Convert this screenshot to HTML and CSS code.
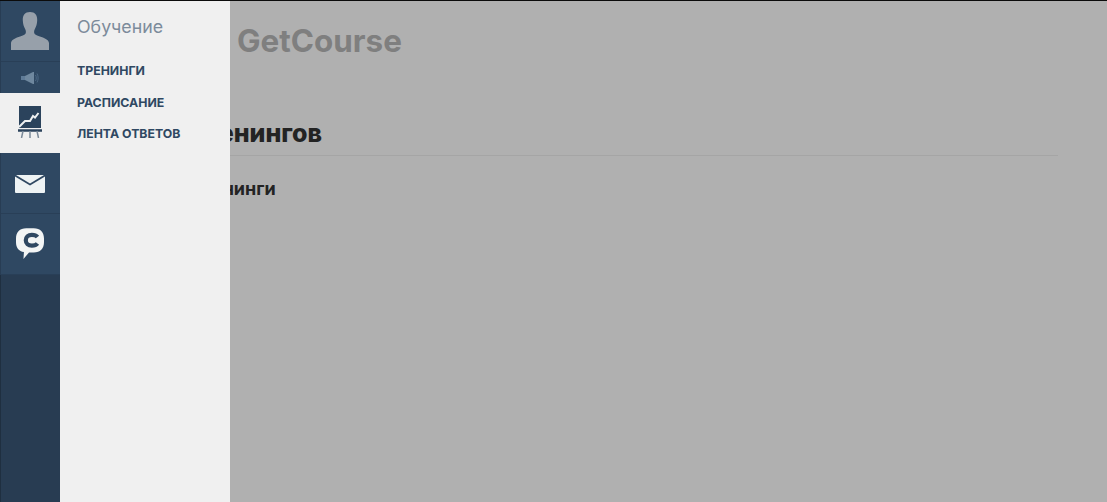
FILE: index.html
```html
<!DOCTYPE html>
<html lang="ru">
<head>
<meta charset="utf-8">
<title>GetCourse</title>
<link rel="stylesheet" href="styles.css">
</head>
<body>
<div class="app">
  <nav class="rail">
    <a class="rail-item rail-avatar">
      <svg width="40" height="40" viewBox="0 0 40 40"><path fill="#97a0aa" d="M20 1c-5 0-7.500 3.300-7.200 8.500.2 3.500 1 6 2.300 8.500.8 1.300 1 3 .6 4.300-.5 1.500-2.600 2.200-5.600 3.300C6 27 1.500 28.500 1 32v7h38v-7c-.5-3.500-5-5-9.100-6.400-3-1.100-5.100-1.800-5.600-3.300-.4-1.300-.2-3 .6-4.300 1.300-2.500 2.100-5 2.300-8.500C27.500 4.300 25 1 20 1z"/></svg>
    </a>
    <a class="rail-item rail-sound">
      <svg width="20" height="14" viewBox="0 0 20 14"><path fill="#5f7b97" d="M1 5h4v4H1z"/><path fill="#6f889f" d="M5 5l8-4h1v12h-1L5 9z"/><path fill="none" stroke="#4d6985" stroke-width="1" d="M15.500 4c1 2 1 4 0 6M17 2.500c1.500 3 1.500 6 0 9"/></svg>
    </a>
    <a class="rail-item rail-active">
      <svg width="24" height="32" viewBox="0 0 24 32"><rect x="1" y="0" width="22" height="22" fill="#2b435c"/><path fill="none" stroke="#eef1f2" stroke-width="2" d="M1 21l6-6h5l3-5 2 1.500L20.500 7"/><path stroke="#2b435c" stroke-width="2.500" d="M0 24.500h24"/><path stroke="#7b8a99" stroke-width="1.500" d="M5 25l-1.500 7M12 25v7M19 25l1.500 7"/></svg>
    </a>
    <a class="rail-item rail-mail">
      <svg width="30" height="18" viewBox="0 0 30 18"><path fill="#eef3f4" d="M1 0h28L15 8.500z"/><path fill="#eef3f4" d="M0 1.500V17a1 1 0 0 0 1 1h28a1 1 0 0 0 1-1V1.500L15 10.500z"/></svg>
    </a>
    <a class="rail-item">
      <svg width="28" height="32" viewBox="0 0 30 34"><path fill="#f3f5f5" d="M11 0h8c7 0 11 4 11 11v4c0 7-4 11-11 11h-5l-6 7 .5-7.300C3 24.500 0 21 0 15v-4C0 4 4 0 11 0z"/><path fill="none" stroke="#2f4862" stroke-width="4.500" d="M23 9.500c-1-1.300-3.300-2.300-6-2.300-4 0-6.500 2.300-6.500 5.800s2.500 5.800 6.500 5.800c2.700 0 5-1 6-2.300"/></svg>
    </a>
  </nav>
  <aside class="panel">
    <h2 class="panel-title">Обучение</h2>
    <ul class="panel-menu">
      <li><a>Тренинги</a></li>
      <li><a>Расписание</a></li>
      <li><a>Лента ответов</a></li>
    </ul>
  </aside>
  <main class="main">
    <div class="brand">GetCourse</div>
    <h1 class="page-title">Каталог тренингов</h1>
    <h3 class="section-title">Мои тренинги</h3>
  </main>
</div>
</body>
</html>
```
FILE: styles.css
```css
* { box-sizing: border-box; }
html, body { margin: 0; height: 100%; overflow: hidden; }
body { background: #b0b0b0; font-family: Inter, "Liberation Sans", sans-serif; }
.app { position: relative; display: flex; height: 502px; border-top: 1px solid #0b0b0b; }
.rail { flex: 0 0 60px; display: flex; flex-direction: column; background: #283c52; box-shadow: inset 1px 0 0 #1f2f40; height: 501px; }
.rail-item { height: 61px; display: flex; align-items: center; justify-content: center; padding-right: 2px; background: #2f4862; border-bottom: 1px solid #293f57; border-left: 1px solid #283d54; }
.rail-sound { height: 31px; border-bottom: 0; }
.rail-active { height: 60px; padding: 0 0 2px; background: #f0f0f0; border: 0; }
.rail-mail { padding-top: 2px; }
.panel { flex: 0 0 170px; background: #f0f0f0; padding: 15px 17px 0; position: relative; z-index: 1; }
.panel-title { margin: 0 0 25px; font-size: 17.8px; line-height: 22px; font-weight: 400; color: #7c8b9b; }
.panel-menu { margin: 0; padding: 0; list-style: none; display: flex; flex-direction: column; gap: 15px; }
.panel-menu li:first-child { margin-bottom: 1px; }
.panel-menu a { display: block; font-size: 12.3px; line-height: 16px; font-weight: 700; text-transform: uppercase; color: #2f4862; }
.main { flex: 1; min-width: 0; margin-left: -149px; margin-right: 49px; padding: 23px 0 0 0; }
.brand { margin-left: 156px; font-size: 31.4px; line-height: 34px; font-weight: 700; color: #7f7f7f; }
.page-title { margin: 62px 0 0; padding-bottom: 9px; border-bottom: 1px solid #a5a5a5; font-size: 25px; line-height: 26px; font-weight: 800; color: #232323; }
.section-title { margin: 23px 0 0; font-size: 18px; line-height: 20px; font-weight: 700; color: #232323; padding-left: 67px; }
```
